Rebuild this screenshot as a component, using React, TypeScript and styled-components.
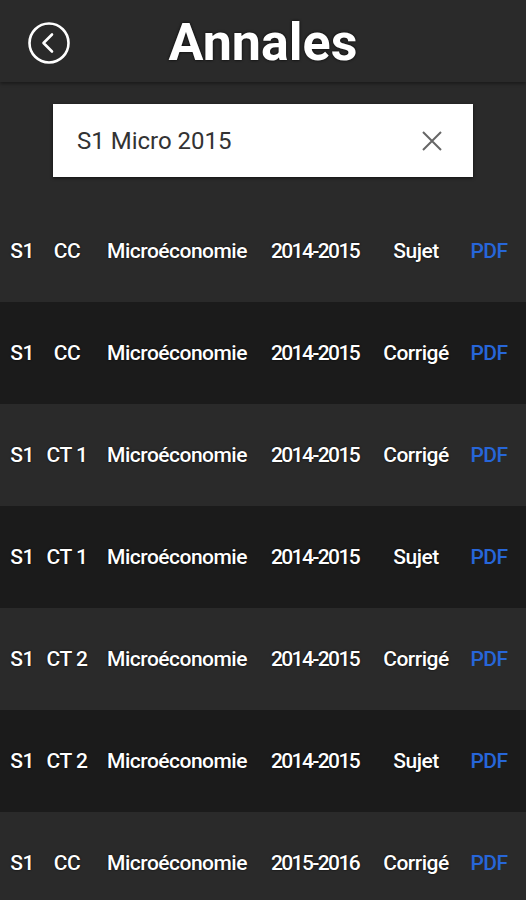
import React from 'react';
import styled, { createGlobalStyle } from 'styled-components';

type Annale = {
  semester: string;
  exam: string;
  subject: string;
  year: string;
  kind: string;
};

const annales: Annale[] = [
  { semester: 'S1', exam: 'CC', subject: 'Microéconomie', year: '2014-2015', kind: 'Sujet' },
  { semester: 'S1', exam: 'CC', subject: 'Microéconomie', year: '2014-2015', kind: 'Corrigé' },
  { semester: 'S1', exam: 'CT 1', subject: 'Microéconomie', year: '2014-2015', kind: 'Corrigé' },
  { semester: 'S1', exam: 'CT 1', subject: 'Microéconomie', year: '2014-2015', kind: 'Sujet' },
  { semester: 'S1', exam: 'CT 2', subject: 'Microéconomie', year: '2014-2015', kind: 'Corrigé' },
  { semester: 'S1', exam: 'CT 2', subject: 'Microéconomie', year: '2014-2015', kind: 'Sujet' },
  { semester: 'S1', exam: 'CC', subject: 'Microéconomie', year: '2015-2016', kind: 'Corrigé' },
];

export default function App() {
  return (
    <StPage>
      <GlobalStyle />
      <StHeader>
        <StBackButton aria-label="Retour">
          <svg width="44" height="44" viewBox="0 0 44 44" fill="none">
            <circle cx="22" cy="22" r="19.5" stroke="#fff" strokeWidth="2.6" />
            <path d="M25 13.5 L16.5 22 L25 30.5" stroke="#fff" strokeWidth="2.6" strokeLinecap="round" strokeLinejoin="round" />
          </svg>
        </StBackButton>
        <StTitle>Annales</StTitle>
      </StHeader>
      <StSearchWrap>
        <StSearchBox>
          <StSearchText>S1 Micro 2015</StSearchText>
          <svg width="22" height="22" viewBox="0 0 22 22">
            <path d="M2 2 L20 20 M20 2 L2 20" stroke="#666" strokeWidth="2" />
          </svg>
        </StSearchBox>
      </StSearchWrap>
      <StList>
        {annales.map((a, i) => (
          <StRow key={i} $dark={i % 2 === 1}>
            <StCell>{a.semester}</StCell>
            <StCell>{a.exam}</StCell>
            <StCell>{a.subject}</StCell>
            <StCell $tight>{a.year}</StCell>
            <StCell>{a.kind}</StCell>
            <StLink>PDF</StLink>
          </StRow>
        ))}
      </StList>
    </StPage>
  );
}

const GlobalStyle = createGlobalStyle`
  body {
    margin: 0;
    background: #2a2a2a;
    overflow: hidden;
  }
`;

const StPage = styled.div`
  width: 526px;
  height: 900px;
  overflow: hidden;
  background-color: #2a2a2a;
  font-family: Roboto, 'Liberation Sans', sans-serif;
  color: #fff;
`;

const StHeader = styled.header`
  position: relative;
  height: 82px;
  display: flex;
  align-items: center;
  justify-content: center;
  box-shadow: 0 2px 3px rgba(0, 0, 0, 0.35);
`;

const StBackButton = styled.button`
  position: absolute;
  left: 27px;
  top: 21px;
  padding: 0;
  border: none;
  background: none;
  display: flex;
`;

const StTitle = styled.h1`
  margin: 0;
  font-size: 52px;
  font-weight: bold;
  line-height: 1;
  padding-top: 4px;
  text-shadow: 0 0 3px #000;
`;

const StSearchWrap = styled.div`
  padding: 22px 53px 23px;
`;

const StSearchBox = styled.div`
  height: 73px;
  background: #fff;
  box-shadow: 0 1px 3px rgba(0, 0, 0, 0.6);
  display: flex;
  align-items: center;
  justify-content: space-between;
  padding: 0 30px 0 24px;
`;

const StSearchText = styled.span`
  font-size: 24px;
  color: #333;
`;

const StList = styled.div`
  display: flex;
  flex-direction: column;
`;

const StRow = styled.div<{ $dark: boolean }>`
  height: 102px;
  display: grid;
  grid-template-columns: 44px 46px 174px 102px 100px 46px;
  align-items: center;
  background-color: ${(p) => (p.$dark ? '#1b1b1b' : '#2a2a2a')};
`;

const StCell = styled.span<{ $tight?: boolean }>`
  text-align: center;
  white-space: nowrap;
  font-size: 21px;
  font-weight: 500;
  letter-spacing: ${(p) => (p.$tight ? '-1.6px' : '-0.5px')};
  text-shadow: 0 0 2px #000;
`;

const StLink = styled(StCell)`
  color: #2766d9;
  text-shadow: none;
`;
